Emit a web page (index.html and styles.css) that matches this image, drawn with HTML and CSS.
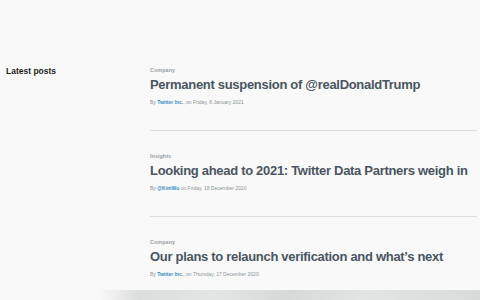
FILE: index.html
```html
<!DOCTYPE html>
<html lang="en">
<head>
    <meta charset="UTF-8">
    <title>Latest posts</title>
    <link rel="stylesheet" href="styles.css">
</head>
<body>
    <div class="page">
        <h2 class="side-title">Latest posts</h2>
        <div class="posts">
            <article class="post">
                <div class="category">Company</div>
                <h3 class="post-title">Permanent suspension of @realDonaldTrump</h3>
                <div class="byline">By <a href="#">Twitter Inc.</a>, on Friday, 8 January 2021</div>
            </article>
            <article class="post">
                <div class="category">Insights</div>
                <h3 class="post-title">Looking ahead to 2021: Twitter Data Partners weigh in</h3>
                <div class="byline">By <a href="#">@KimWu</a> on Friday, 18 December 2020</div>
            </article>
            <article class="post">
                <div class="category">Company</div>
                <h3 class="post-title">Our plans to relaunch verification and what’s next</h3>
                <div class="byline">By <a href="#">Twitter Inc.</a>, on Thursday, 17 December 2020</div>
            </article>
        </div>
    </div>
    <div class="bottom-band"></div>
</body>
</html>
```

FILE: styles.css
```css
body {
    margin: 0;
    background: #f8f9f8;
    font-family: "Liberation Sans", Arial, sans-serif;
    height: 300px;
    overflow: hidden;
}

.page {
    display: flex;
    padding: 66px 3px 0 6px;
}

.side-title {
    width: 144px;
    flex: none;
    margin: 0;
    font-size: 8.5px;
    font-weight: bold;
    color: #1d1f21;
    line-height: 11px;
}

.posts {
    flex: 1;
}

.post {
    height: 63px;
    padding-top: 1px;
    border-bottom: 1px solid #dcdddc;
    margin-bottom: 21px;
}

.post:last-child {
    height: auto;
    border-bottom: none;
    margin-bottom: 0;
}

.category {
    font-size: 5.5px;
    font-weight: bold;
    color: #9aa1a6;
    line-height: 7px;
}

.post-title {
    margin: 2px 0 0;
    font-size: 13px;
    line-height: 18px;
    letter-spacing: -0.3px;
    font-weight: bold;
    color: #4a5561;
    white-space: nowrap;
}

.byline {
    margin-top: 5px;
    font-size: 5px;
    line-height: 7px;
    color: #8c9398;
}

.byline a {
    color: #3d8fbf;
    font-weight: bold;
    text-decoration: none;
}

.bottom-band {
    position: absolute;
    left: 100px;
    right: 0;
    top: 290px;
    height: 10px;
    background: linear-gradient(90deg, rgba(220,222,222,0) 0%, #dcdedd 10%, #e4e6e5 30%, #d7d9d9 50%, #e3e5e4 70%, #d9dbdb 100%);
}
```
